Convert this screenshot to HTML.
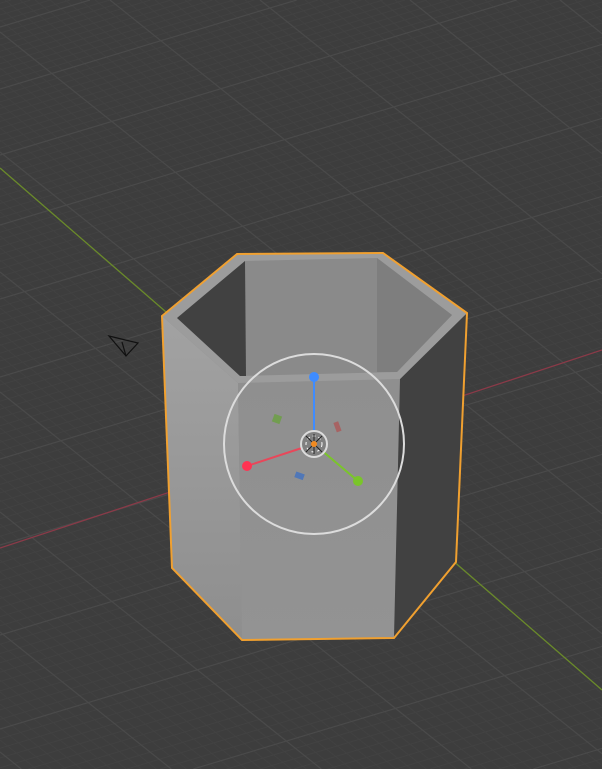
<!DOCTYPE html>
<html><head><meta charset="utf-8"><style>
html,body{margin:0;padding:0;background:#3d3d3d;width:602px;height:769px;overflow:hidden;position:relative}
svg{display:block;position:absolute;left:0;top:0;overflow:hidden}
</style></head><body>
<svg id="s" width="602" height="769" viewBox="0 0 602 769" xmlns="http://www.w3.org/2000/svg">
<rect width="602" height="769" fill="#3d3d3d"/>
<g id="minor" stroke="#424242" stroke-width="1"></g>
<g id="major" stroke="#4a4a4a" stroke-width="1.2"></g>
<line x1="0" y1="168" x2="602" y2="690" stroke="#6a8a2a" stroke-width="1.3"/>
<line x1="0" y1="548" x2="602" y2="350" stroke="#8a3a48" stroke-width="1.3"/>
<g stroke="#111" stroke-width="1.2" fill="none">
<path d="M109 336 L138 343 L126 356 Z"/><path d="M126 356 L122 342"/>
</g>
<circle cx="250" cy="368" r="8" fill="none" stroke="#222" stroke-dasharray="3 2"/>
<polygon points="162,316 237,254 383,253 467,313 456,562 394,638 242,640 172,568" fill="#8a8a8a"/>
<defs>
<linearGradient id="lf" x1="0" y1="0" x2="0" y2="1"><stop offset="0" stop-color="#a2a2a2"/><stop offset="1" stop-color="#8e8e8e"/></linearGradient>
<linearGradient id="ff" x1="0" y1="0" x2="0" y2="1"><stop offset="0" stop-color="#8f8f8f"/><stop offset="1" stop-color="#939393"/></linearGradient>
</defs>
<polygon points="162,316 238,383 242,640 172,568" fill="url(#lf)"/>
<polygon points="238,383 400,379 394,638 242,640" fill="url(#ff)"/>
<polygon points="400,379 467,313 456,562 394,638" fill="#414141"/>
<polygon points="162,316 237,254 383,253 467,313 400,379 238,383" fill="#9c9c9c"/>
<polygon points="177,318 245,261 377,258 452,315 397,372 240,376" fill="#8a8a8a"/>
<polygon points="177,318 245,261 246,376 240,376" fill="#414141"/>
<polygon points="377,258 452,315 397,372 377,372" fill="#7e7e7e"/>
<polygon points="162,316 237,254 383,253 467,313 456,562 394,638 242,640 172,568" fill="none" stroke="#f0a030" stroke-width="2"/>
<circle cx="314" cy="444" r="90" fill="none" stroke="#dcdcdc" stroke-width="2"/>
<line x1="314" y1="444" x2="314" y2="377" stroke="#3f8cff" stroke-width="2"/>
<line x1="314" y1="444" x2="247" y2="466" stroke="#e8475a" stroke-width="2"/>
<line x1="314" y1="444" x2="358" y2="481" stroke="#7ac52a" stroke-width="2"/>
<circle cx="314" cy="377" r="5" fill="#3f8cff"/>
<circle cx="247" cy="466" r="5" fill="#ff3352"/>
<circle cx="358" cy="481" r="5" fill="#7ac52a"/>
<rect x="273" y="415" width="8" height="8" fill="#6aa040" opacity=".8" transform="rotate(20 277 419)"/>
<rect x="335" y="422" width="5" height="10" fill="#b05050" opacity=".7" transform="rotate(-20 337 427)"/>
<rect x="295" y="473" width="9" height="6" fill="#4070c0" opacity=".8" transform="rotate(20 300 476)"/>
<circle cx="314" cy="444" r="13" fill="#808080" stroke="#dcdcdc" stroke-width="2"/>
<circle cx="314" cy="444" r="8" fill="none" stroke="#fff" stroke-dasharray="3 3"/>
<path d="M306 436 L322 452 M322 436 L306 452 M314 434 L314 454" stroke="#222" stroke-width="1"/>
<circle cx="314" cy="444" r="3" fill="#f08a20"/>
</svg>
<script>
var ns="http://www.w3.org/2000/svg",W=602,H=769;
function L(g,x1,y1,x2,y2){
  var dx=x2-x1,dy=y2-y1,t0=0,t1=1,p=[-dx,dx,-dy,dy],q=[x1,W-x1,y1,H-y1];
  for(var k=0;k<4;k++){if(p[k]==0){if(q[k]<0)return;}else{var r=q[k]/p[k];if(p[k]<0){if(r>t1)return;if(r>t0)t0=r;}else{if(r<t0)return;if(r<t1)t1=r;}}}
  var l=document.createElementNS(ns,"line");
  l.setAttribute("x1",x1+t0*dx);l.setAttribute("y1",y1+t0*dy);l.setAttribute("x2",x1+t1*dx);l.setAttribute("y2",y1+t1*dy);
  document.getElementById(g).appendChild(l);}
for(var i=-70;i<70;i++){var x0=110+i*15; L(i%10==0?"major":"minor",x0-400,-320,x0+1200,960);}
for(var j=-30;j<140;j++){var y=27+j*6+j*j*0.02; L(j%10==0?"major":"minor",-50,y+15,700,y-210);}
</script>
</body></html>
